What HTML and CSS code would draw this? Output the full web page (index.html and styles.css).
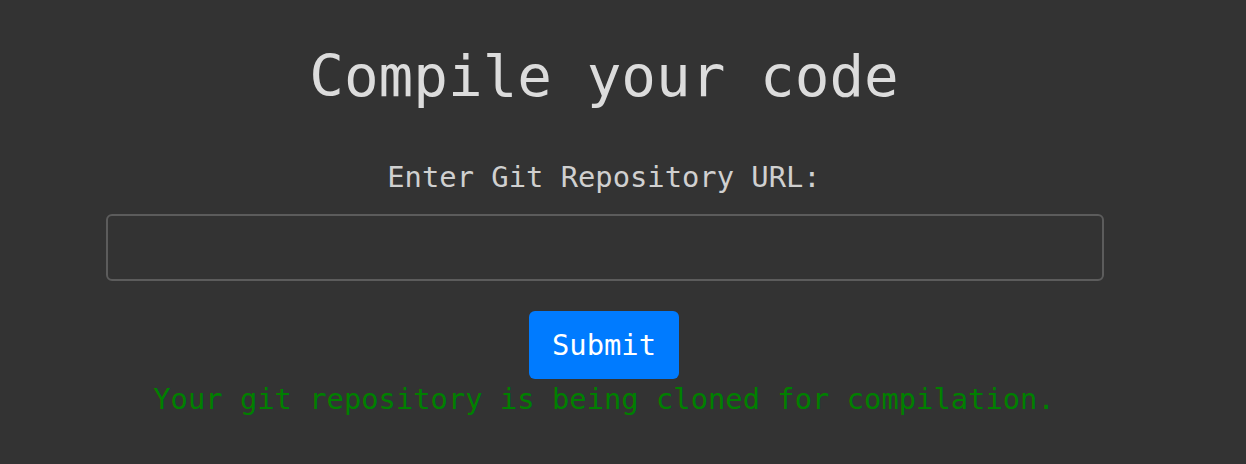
FILE: index.html
```html
<!DOCTYPE html>
<html lang="en">
<head>
<meta charset="utf-8">
<title>Compile your code</title>
<link rel="stylesheet" href="styles.css">
</head>
<body>
<main class="page">
  <h1 class="title">Compile your code</h1>
  <form class="form">
    <label class="label" for="repo">Enter Git Repository URL:</label>
    <input class="input" id="repo" type="text">
    <button class="submit" type="button">Submit</button>
  </form>
  <p class="status">Your git repository is being cloned for compilation.</p>
</main>
</body>
</html>
```
FILE: styles.css
```css
html, body {
  margin: 0;
  padding: 0;
  background: #333333;
  height: 100%;
}
body {
  font-family: "DejaVu Sans Mono", monospace;
}
.page {
  width: 1208px;
  display: flex;
  flex-direction: column;
  align-items: center;
  padding-top: 43px;
}
.title {
  margin: 0;
  font-size: 57.6px;
  line-height: 67px;
  font-weight: normal;
  color: #dcdcdc;
}
.form {
  display: flex;
  flex-direction: column;
  align-items: center;
  margin-top: 50px;
}
.label {
  font-size: 28.8px;
  line-height: 34px;
  color: #d0d0d0;
}
.input {
  box-sizing: border-box;
  margin-top: 20px;
  margin-left: 2px;
  width: 998px;
  height: 67px;
  background: #333333;
  border: 2px solid #5c5c5c;
  border-radius: 6px;
  outline: none;
}
.submit {
  margin-top: 30px;
  width: 150px;
  height: 68px;
  background: #007bff;
  color: #ffffff;
  border: none;
  border-radius: 6px;
  font-family: "DejaVu Sans Mono", monospace;
  font-size: 28.8px;
  padding: 0;
}
.status {
  margin: 3px 0 0;
  font-size: 28.8px;
  line-height: 34px;
  color: #008000;
}
```
